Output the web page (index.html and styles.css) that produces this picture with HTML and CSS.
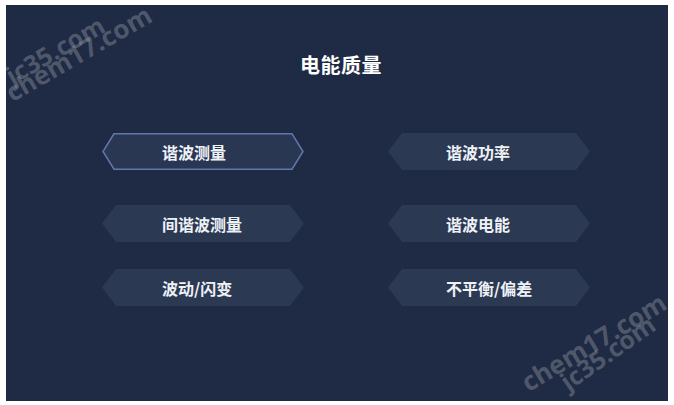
FILE: index.html
```html
<!DOCTYPE html>
<html lang="zh">
<head>
<meta charset="utf-8">
<title>电能质量</title>
<link rel="stylesheet" href="styles.css">
</head>
<body>
<div class="panel">
  <h1 class="title">电能质量</h1>
  <div class="rows">
    <div class="row row-first">
      <div class="btn btn-active">
        <svg class="shape" viewBox="0 0 202 37" width="202" height="37"><polygon points="12,0.75 190,0.75 201,18.5 190,36.25 12,36.25 1,18.5" /></svg>
        <span class="label">谐波测量</span>
      </div>
      <div class="btn btn-right">
        <svg class="shape" viewBox="0 0 202 37" width="202" height="37"><polygon points="14,0 188,0 202,18.5 188,37 14,37 0,18.5" /></svg>
        <span class="label">谐波功率</span>
      </div>
    </div>
    <div class="row">
      <div class="btn">
        <svg class="shape" viewBox="0 0 202 37" width="202" height="37"><polygon points="14,0 188,0 202,18.5 188,37 14,37 0,18.5" /></svg>
        <span class="label">间谐波测量</span>
      </div>
      <div class="btn btn-right">
        <svg class="shape" viewBox="0 0 202 37" width="202" height="37"><polygon points="14,0 188,0 202,18.5 188,37 14,37 0,18.5" /></svg>
        <span class="label">谐波电能</span>
      </div>
    </div>
    <div class="row">
      <div class="btn">
        <svg class="shape" viewBox="0 0 202 37" width="202" height="37"><polygon points="14,0 188,0 202,18.5 188,37 14,37 0,18.5" /></svg>
        <span class="label">波动/闪变</span>
      </div>
      <div class="btn btn-right">
        <svg class="shape" viewBox="0 0 202 37" width="202" height="37"><polygon points="14,0 188,0 202,18.5 188,37 14,37 0,18.5" /></svg>
        <span class="label">不平衡/偏差</span>
      </div>
    </div>
  </div>
  <span class="wm wm-tl1">jc35.com</span>
  <span class="wm wm-tl2">chem17.com</span>
  <span class="wm wm-br1">chem17.com</span>
  <span class="wm wm-br2">jc35.com</span>
</div>
</body>
</html>
```
FILE: styles.css
```css
html, body {
  margin: 0;
  padding: 0;
  background: #ffffff;
}
body {
  width: 674px;
  height: 405px;
  overflow: hidden;
  font-family: "Noto Sans CJK SC", "Noto Sans", sans-serif;
}
.panel {
  position: relative;
  margin: 5px 0 0 6px;
  width: 662px;
  height: 396px;
  background: #1f2a44;
  overflow: hidden;
  display: flex;
  flex-direction: column;
}
.title {
  margin: 48px 0 0 0;
  padding-left: 8px;
  font-size: 20px;
  line-height: 24px;
  font-weight: 700;
  color: #ffffff;
  text-align: center;
  letter-spacing: 0.5px;
}
.rows {
  margin-top: 56px;
  display: flex;
  flex-direction: column;
  gap: 27px;
  padding-left: 96px;
}
.row {
  display: flex;
  gap: 84px;
}
.row-first {
  margin-bottom: 8px;
}
.btn {
  position: relative;
  width: 202px;
  height: 37px;
  display: flex;
  align-items: center;
  padding-left: 60px;
  box-sizing: border-box;
}
.btn-right {
  padding-left: 58px;
}
.shape {
  position: absolute;
  left: 0;
  top: 0;
}
.shape polygon {
  fill: #2b3953;
}
.btn-active .shape polygon {
  fill: #293753;
  stroke: #6278aa;
  stroke-width: 1.5;
}
.label {
  position: relative;
  font-size: 16px;
  line-height: 20px;
  font-weight: 700;
  color: #eef1f6;
  white-space: nowrap;
}
.wm {
  position: absolute;
  font-family: "Open Sans", "DejaVu Sans", sans-serif;
  font-weight: 700;
  color: rgba(150, 155, 165, 0.42);
  transform-origin: 0 100%;
  white-space: nowrap;
  line-height: 1;
}
.wm-tl1 {
  left: 8px;
  top: 58px;
  font-size: 25px;
  transform: rotate(-30deg);
}
.wm-tl2 {
  left: 8px;
  top: 74px;
  font-size: 26px;
  transform: rotate(-30deg);
}
.wm-br1 {
  left: 524px;
  top: 364px;
  font-size: 26px;
  transform: rotate(-31deg);
}
.wm-br2 {
  left: 564px;
  top: 364px;
  font-size: 25px;
  transform: rotate(-35deg);
}
```
